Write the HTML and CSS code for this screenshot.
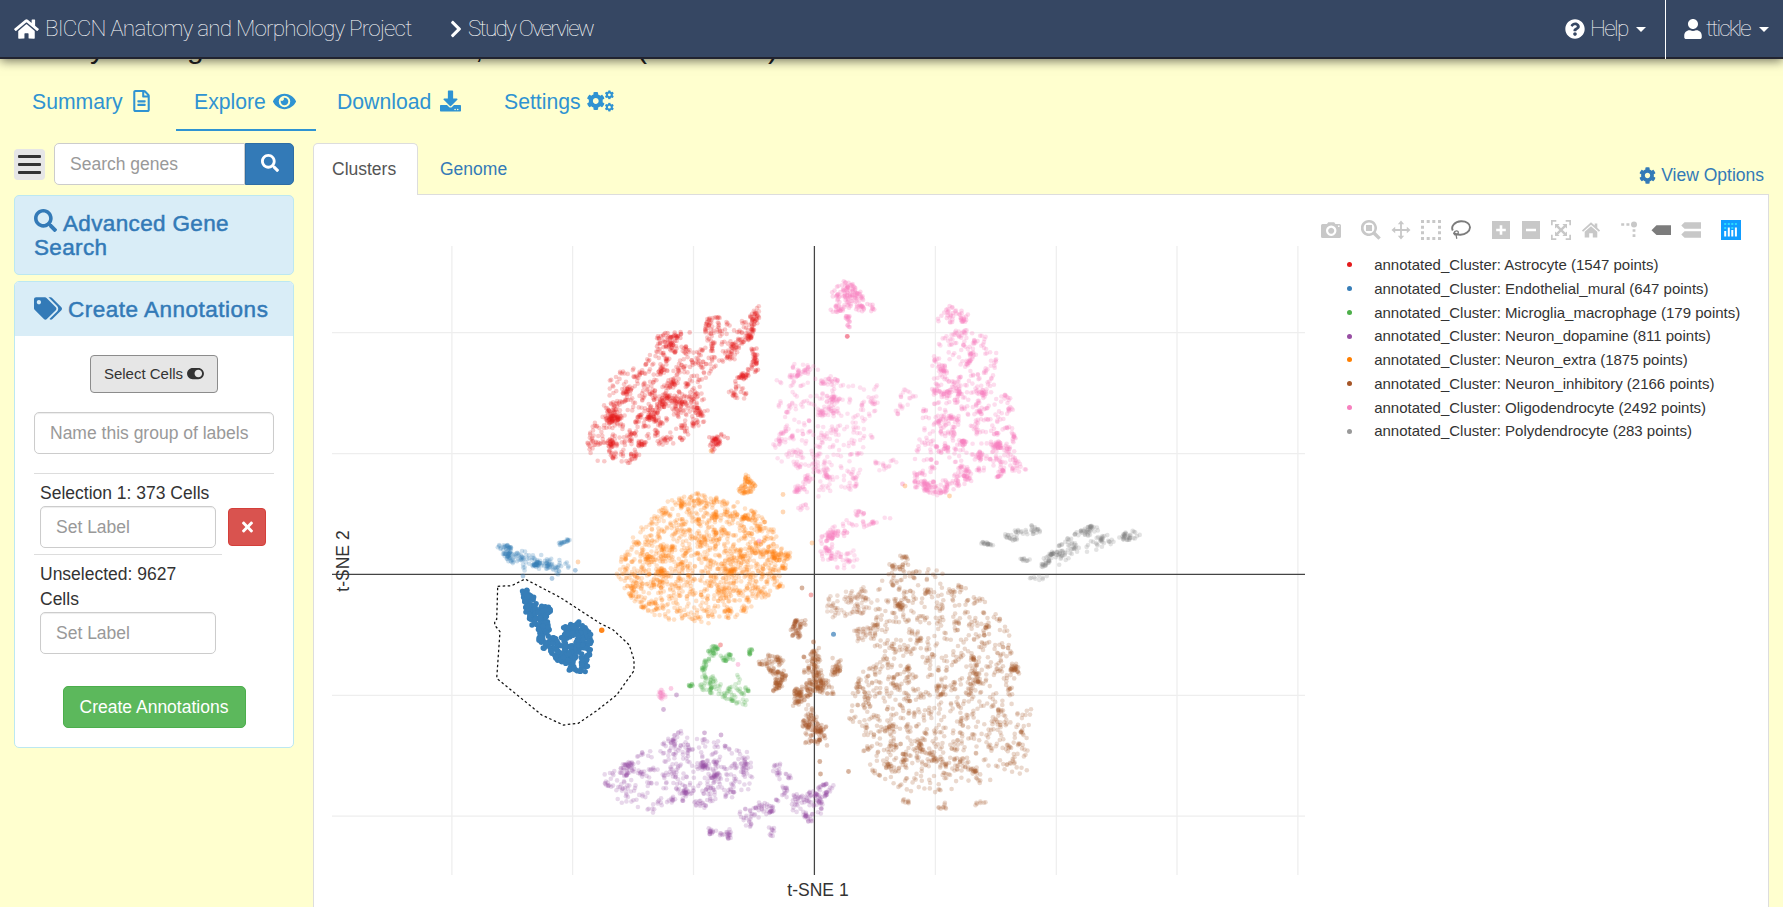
FILE: index.html
```
<!DOCTYPE html>
<html lang="en">
<head>
<meta charset="utf-8">
<title>Study Overview</title>
<link rel="stylesheet" href="styles.css">
</head>
<body>
<svg class="defs" aria-hidden="true">
  <symbol id="home" viewBox="0 0 576 512"><path d="M280.37 148.26L96 300.11V464a16 16 0 0 0 16 16l112.06-.29a16 16 0 0 0 15.92-16V368a16 16 0 0 1 16-16h64a16 16 0 0 1 16 16v95.64a16 16 0 0 0 16 16.05L464 480a16 16 0 0 0 16-16V300L295.67 148.26a12.19 12.19 0 0 0-15.3 0zM571.6 251.47L488 182.56V44.05a12 12 0 0 0-12-12h-56a12 12 0 0 0-12 12v72.61L318.47 43a48 48 0 0 0-61 0L4.34 251.47a12 12 0 0 0-1.6 16.9l25.5 31A12 12 0 0 0 45.15 301l235.22-193.74a12.19 12.19 0 0 1 15.3 0L530.9 301a12 12 0 0 0 16.9-1.6l25.5-31a12 12 0 0 0-1.7-16.93z"/></symbol>
  <symbol id="chevron" viewBox="0 0 320 512"><path d="M285.476 272.971L91.132 467.314c-9.373 9.373-24.569 9.373-33.941 0l-22.667-22.667c-9.357-9.357-9.375-24.522-.04-33.901L188.505 256 34.484 101.255c-9.335-9.379-9.317-24.544.04-33.901l22.667-22.667c9.373-9.373 24.569-9.373 33.941 0L285.475 239.03c9.373 9.372 9.373 24.568.001 33.941z"/></symbol>
  <symbol id="question" viewBox="0 0 512 512"><path d="M504 256c0 136.997-111.043 248-248 248S8 392.997 8 256C8 119.083 119.043 8 256 8s248 111.083 248 248zM262.655 90c-54.497 0-89.255 22.957-116.549 63.758-3.536 5.286-2.353 12.415 2.715 16.258l34.699 26.31c5.205 3.947 12.621 3.008 16.665-2.122 17.864-22.658 30.113-35.797 57.303-35.797 20.429 0 45.698 13.148 45.698 32.958 0 14.976-12.363 22.667-32.534 33.976C247.128 238.528 216 254.941 216 296v4c0 6.627 5.373 12 12 12h56c6.627 0 12-5.373 12-12v-1.333c0-28.462 83.186-29.647 83.186-106.667 0-58.002-60.165-102-116.531-102zM256 338c-25.365 0-46 20.635-46 46 0 25.364 20.635 46 46 46s46-20.636 46-46c0-25.365-20.635-46-46-46z"/></symbol>
  <symbol id="user" viewBox="0 0 448 512"><path d="M224 256c70.7 0 128-57.3 128-128S294.7 0 224 0 96 57.3 96 128s57.3 128 128 128zm89.6 32h-16.7c-22.2 10.2-46.9 16-72.9 16s-50.6-5.8-72.9-16h-16.7C60.2 288 0 348.2 0 422.4V464c0 26.5 21.5 48 48 48h352c26.5 0 48-21.5 48-48v-41.6c0-74.2-60.2-134.4-134.4-134.4z"/></symbol>
  <symbol id="file" viewBox="0 0 384 512"><path d="M288 248v28c0 6.6-5.4 12-12 12H108c-6.6 0-12-5.4-12-12v-28c0-6.6 5.4-12 12-12h168c6.6 0 12 5.4 12 12zm-12 72H108c-6.6 0-12 5.4-12 12v28c0 6.6 5.4 12 12 12h168c6.6 0 12-5.4 12-12v-28c0-6.6-5.4-12-12-12zm108-188.1V464c0 26.5-21.5 48-48 48H48c-26.5 0-48-21.5-48-48V48C0 21.5 21.5 0 48 0h204.1C264.8 0 277 5.1 286 14.1L369.9 98c9 8.9 14.1 21.2 14.1 33.9zm-128-80V128h76.1L256 51.9zM336 464V176H232c-13.3 0-24-10.7-24-24V48H48v416h288z"/></symbol>
  <symbol id="eye" viewBox="0 0 576 512"><path d="M572.52 241.4C518.29 135.59 410.93 64 288 64S57.68 135.64 3.48 241.41a32.35 32.35 0 0 0 0 29.19C57.71 376.41 165.07 448 288 448s230.32-71.64 284.52-177.41a32.35 32.35 0 0 0 0-29.19zM288 400a144 144 0 1 1 144-144 143.93 143.93 0 0 1-144 144zm0-240a95.31 95.31 0 0 0-25.31 3.79 47.85 47.85 0 0 1-66.9 66.9A95.78 95.78 0 1 0 288 160z"/></symbol>
  <symbol id="download" viewBox="0 0 512 512"><path d="M216 0h80c13.3 0 24 10.7 24 24v168h87.7c17.8 0 26.7 21.5 14.1 34.1L269.7 378.3c-7.5 7.5-19.8 7.5-27.3 0L90.1 226.1c-12.6-12.6-3.7-34.1 14.1-34.1H192V24c0-13.3 10.7-24 24-24zm296 376v112c0 13.3-10.7 24-24 24H24c-13.3 0-24-10.7-24-24V376c0-13.3 10.7-24 24-24h146.7l49 49c20.1 20.1 52.5 20.1 72.6 0l49-49H488c13.3 0 24 10.7 24 24zm-124 88c0-11-9-20-20-20s-20 9-20 20 9 20 20 20 20-9 20-20zm64 0c0-11-9-20-20-20s-20 9-20 20 9 20 20 20 20-9 20-20z"/></symbol>
  <symbol id="cog" viewBox="0 0 512 512"><path d="M487.4 315.7l-42.6-24.6c4.3-23.2 4.3-47 0-70.2l42.6-24.6c4.9-2.8 7.1-8.6 5.5-14-11.1-35.6-30-67.8-54.7-94.6-3.8-4.1-10-5.1-14.8-2.3L380.8 110c-17.9-15.4-38.5-27.3-60.8-35.1V25.8c0-5.6-3.9-10.5-9.4-11.7-36.7-8.2-74.3-7.8-109.2 0-5.5 1.2-9.4 6.1-9.4 11.7V75c-22.2 7.9-42.8 19.8-60.8 35.1L88.7 85.5c-4.9-2.8-11-1.9-14.8 2.3-24.7 26.7-43.6 58.9-54.7 94.6-1.7 5.4.6 11.2 5.5 14L67.3 221c-4.3 23.2-4.3 47 0 70.2l-42.6 24.6c-4.9 2.8-7.1 8.6-5.5 14 11.1 35.6 30 67.8 54.7 94.6 3.8 4.1 10 5.1 14.8 2.3l42.6-24.6c17.9 15.4 38.5 27.3 60.8 35.1v49.2c0 5.6 3.9 10.5 9.4 11.7 36.7 8.2 74.3 7.8 109.2 0 5.5-1.2 9.4-6.1 9.4-11.7v-49.2c22.2-7.9 42.8-19.8 60.8-35.1l42.6 24.6c4.9 2.8 11 1.9 14.8-2.3 24.7-26.7 43.6-58.9 54.7-94.6 1.5-5.5-.7-11.3-5.6-14.1zM256 336c-44.1 0-80-35.9-80-80s35.9-80 80-80 80 35.9 80 80-35.9 80-80 80z"/></symbol>
  <symbol id="cogs" viewBox="0 0 640 512"><use href="#cog" x="-12" y="36" width="440" height="440"/><use href="#cog" x="420" y="0" width="220" height="220"/><use href="#cog" x="420" y="292" width="220" height="220"/></symbol>
  <symbol id="search" viewBox="0 0 512 512"><path d="M505 442.7L405.3 343c-4.5-4.5-10.6-7-17-7H372c27.6-35.3 44-79.7 44-128C416 93.1 322.9 0 208 0S0 93.1 0 208s93.1 208 208 208c48.3 0 92.7-16.4 128-44v16.3c0 6.4 2.5 12.5 7 17l99.7 99.7c9.4 9.4 24.6 9.4 33.9 0l28.3-28.3c9.4-9.4 9.4-24.6.1-34zM208 336c-70.7 0-128-57.2-128-128 0-70.7 57.2-128 128-128 70.7 0 128 57.2 128 128 0 70.7-57.2 128-128 128z"/></symbol>
  <symbol id="tags" viewBox="0 0 640 512"><path d="M497.941 225.941L286.059 14.059A48 48 0 0 0 252.118 0H48C21.49 0 0 21.49 0 48v204.118a48 48 0 0 0 14.059 33.941l211.882 211.882c18.744 18.745 49.136 18.746 67.882 0l204.118-204.118c18.745-18.745 18.745-49.137 0-67.882zM112 160c-26.51 0-48-21.49-48-48s21.49-48 48-48 48 21.49 48 48-21.49 48-48 48zm513.941 133.823L421.823 497.941c-18.745 18.745-49.137 18.745-67.882 0l-.36-.36L527.64 323.522c16.999-16.999 26.36-39.6 26.36-63.64s-9.362-46.641-26.36-63.64L331.397 0h48.721a48 48 0 0 1 33.941 14.059l211.882 211.882c18.745 18.745 18.745 49.137 0 67.882z"/></symbol>
  <symbol id="toggle" viewBox="0 0 576 512"><path d="M384 64H192C86 64 0 150 0 256s86 192 192 192h192c106 0 192-86 192-192S490 64 384 64zm0 320c-70.8 0-128-57.3-128-128 0-70.8 57.3-128 128-128 70.8 0 128 57.3 128 128 0 70.8-57.3 128-128 128z"/></symbol>
  <symbol id="times" viewBox="0 0 352 512"><path d="M242.72 256l100.07-100.07c12.28-12.28 12.28-32.19 0-44.48l-22.24-22.24c-12.28-12.28-32.19-12.28-44.48 0L176 189.28 75.93 89.21c-12.28-12.28-32.19-12.28-44.48 0L9.21 111.45c-12.28 12.28-12.28 32.19 0 44.48L109.28 256 9.21 356.07c-12.28 12.28-12.28 32.19 0 44.48l22.24 22.24c12.28 12.28 32.2 12.28 44.48 0L176 322.72l100.07 100.07c12.28 12.28 32.2 12.28 44.48 0l22.24-22.24c12.28-12.28 12.28-32.19 0-44.48L242.72 256z"/></symbol>
</svg>

<header class="navbar">
  <a class="brand"><svg class="i-home"><use href="#home"/></svg><span class="thin brand-text">BICCN Anatomy and Morphology Project</span></a>
  <a class="crumb"><svg class="i-chevron"><use href="#chevron"/></svg><span class="thin crumb-text">Study Overview</span></a>
  <div class="nav-right">
    <a class="nav-help"><svg class="i-question"><use href="#question"/></svg><span class="thin help-text">Help</span><i class="caret"></i></a>
    <a class="nav-user"><svg class="i-user"><use href="#user"/></svg><span class="thin user-text">ttickle</span><i class="caret"></i></a>
  </div>
</header>

<h1 class="study-title"><span>y</span><span>g</span><span>,</span><span>(</span><span>)</span></h1>

<nav class="study-tabs">
  <a class="tab-summary">Summary<svg class="i-file"><use href="#file"/></svg></a>
  <a class="tab-explore active">Explore<svg class="i-eye"><use href="#eye"/></svg></a>
  <a class="tab-download">Download<svg class="i-download"><use href="#download"/></svg></a>
  <a class="tab-settings">Settings<svg class="i-cogs"><use href="#cogs"/></svg></a>
</nav>

<main class="explore">
  <aside class="sidebar">
    <div class="search-row">
      <button class="menu-btn"><i></i><i></i><i></i></button>
      <div class="search-group">
        <input class="search-input" placeholder="Search genes">
        <button class="search-btn"><svg><use href="#search"/></svg></button>
      </div>
    </div>
    <section class="panel adv-panel"><h4><svg class="i-adv"><use href="#search"/></svg>Advanced Gene Search</h4></section>
    <section class="panel annot-panel">
      <div class="panel-head"><h4><svg class="i-tags"><use href="#tags"/></svg>Create Annotations</h4></div>
      <div class="panel-body">
        <button class="btn-select">Select Cells<svg><use href="#toggle"/></svg></button>
        <input class="field group-name" placeholder="Name this group of labels">
        <div class="selection-row">
          <div class="selection">
            <span>Selection 1: 373 Cells</span>
            <input class="field" placeholder="Set Label">
          </div>
          <button class="btn-delete"><svg><use href="#times"/></svg></button>
        </div>
        <div class="unselected">
          <span>Unselected: 9627 Cells</span>
          <input class="field" placeholder="Set Label">
        </div>
        <button class="btn-create">Create Annotations</button>
      </div>
    </section>
  </aside>

  <section class="results">
    <div class="tabs">
      <a class="tab current">Clusters</a>
      <a class="tab other">Genome</a>
      <a class="view-options"><svg><use href="#cog"/></svg>View Options</a>
    </div>
    <div class="tab-content">
      <svg class="plot" id="plot" viewBox="332 195 973 712" width="973" height="712"></svg>
      <div class="plot-side">
        <div class="modebar">
          <svg viewBox="0 0 20 20"><path fill-rule="evenodd" d="M1.5 4H6l1.2-1.8h6L14.400 4h4.100A1.500 1.500 0 0 1 20 5.500v11a1.500 1.500 0 0 1-1.500 1.500h-17A1.500 1.500 0 0 1 0 16.500v-11A1.500 1.500 0 0 1 1.500 4zM10.200 5.500a5.200 5.200 0 1 0 .01 0zm0 2.200a3 3 0 1 1-.01 0zM17 5.500v1.500h1.500V5.500z"/></svg>
          <svg class="gap" viewBox="0 0 20 20"><path fill-rule="evenodd" d="M8 0a8 8 0 0 1 6.700 12.300l5.100 5.100-2.400 2.400-5.200-5.100A8 8 0 1 1 8 0zm0 2.600a5.400 5.400 0 1 0 .01 0z"/><path d="M5 5h6v6H5z"/></svg>
          <svg viewBox="0 0 20 20"><path d="M10 .5l3.200 3.700h-2.300v4.900h4.900V6.800l3.700 3.200-3.700 3.200v-2.300h-4.900v4.900h2.300L10 19.500l-3.200-3.700h2.300v-4.900H4.200v2.300L.5 10l3.700-3.200v2.300h4.900V4.200H6.800z"/></svg>
          <svg viewBox="0 0 20 20"><path d="M0 0h3v3H0zM5.700 0h3v3h-3zM11.300 0h3v3h-3zM17 0h3v3h-3zM0 5.700h3v3H0zM0 11.300h3v3H0zM0 17h3v3H0zM17 5.700h3v3h-3zM17 11.300h3v3h-3zM17 17h3v3h-3zM5.700 17h3v3h-3zM11.300 17h3v3h-3z"/></svg>
          <svg class="on outline" viewBox="0 0 20 20"><path d="M1.800 10.500C-.5 6 4 1.500 10 1.300c5.500-.2 9.200 2.500 9 6.200-.2 4-4.500 7.200-9.500 7.300-3 .1-5.500-.7-6.900-2"/><path class="fine" d="M3 12.800c.5-2.300 4.500-2.600 4.300-.2-.2 2.700-4.700 3.300-4.300.2zm2.500 1.500c-.5 1.500-.2 3 .3 4.400"/></svg>
          <svg class="gap" viewBox="0 0 20 20"><path fill-rule="evenodd" d="M1 1h18v18H1zM8.700 5.200v3.500H5.200v2.600h3.500v3.500h2.600v-3.500h3.500V8.700h-3.500V5.200z"/></svg>
          <svg viewBox="0 0 20 20"><path fill-rule="evenodd" d="M1 1h18v18H1zM5 8.700v2.600h10V8.700z"/></svg>
          <svg viewBox="0 0 20 20"><path d="M0 0h5.300v1.700H1.700v3.600H0zM20 0h-5.300v1.700h3.600v3.600H20zM0 20h5.300v-1.700H1.700v-3.600H0zM20 20h-5.300v-1.700h3.600v-3.600H20zM4 4h4.600L7.200 5.500 10 8.300l2.800-2.800L11.400 4H16v4.600l-1.500-1.400L11.700 10l2.800 2.800 1.500-1.400V16h-4.600l1.400-1.500-2.800-2.800-2.800 2.800L8.600 16H4v-4.600l1.500 1.400L8.300 10 5.500 7.200 4 8.600z"/></svg>
          <svg viewBox="0 0 20 20"><path d="M10 6.200l6.300 5.600v5.600h-4.500v-4.200H8.200v4.200H3.700v-5.600zM10 2.300l3.700 3.300V3.400h2.600v4.400l2.800 2.600-1.200 1.300L10 4.700l-7.900 7L.9 10.400z"/></svg>
          <svg class="gap" viewBox="0 0 20 20"><path d="M.2 3.200h3v2.600h-3zM5.400 3.200h3v2.600h-3zM11.600 9.200h2.800v2.600h-2.800zM11.600 14.200h2.800V17h-2.800z"/><circle cx="13" cy="4.600" r="3"/></svg>
          <svg class="on" viewBox="0 0 20 20"><path d="M5.500 5.300H20v9.700H5.500L.5 10.200z"/></svg>
          <svg viewBox="0 0 20 20"><path d="M3.500 2.200H20v6.600H3.500L.3 5.500zM3.500 11.200H20v6.600H3.500L.3 14.500z"/></svg>
          <svg class="gap" viewBox="0 0 20 20"><path fill="#119dff" d="M0 0h20v20H0z"/><path fill="#fff" d="M3.200 11h2v5.500h-2zM6.800 7.500h2v9h-2zM10.300 10h2v6.500h-2zM13.900 7.500h2v9h-2z"/><path fill="#3ef" d="M3.200 3.300h2v1.500h-2zM6.800 3.300h2v1.500h-2zM10.300 3.300h2v1.500h-2zM13.900 3.300h2v1.500h-2zM3.200 7.200h2v1.500h-2zM10.300 7.200h2v1.500h-2z"/></svg>
        </div>
        <ul class="legend">
          <li class="c-red">annotated_Cluster: Astrocyte (1547 points)</li>
          <li class="c-blue">annotated_Cluster: Endothelial_mural (647 points)</li>
          <li class="c-green">annotated_Cluster: Microglia_macrophage (179 points)</li>
          <li class="c-purple">annotated_Cluster: Neuron_dopamine (811 points)</li>
          <li class="c-orange">annotated_Cluster: Neuron_extra (1875 points)</li>
          <li class="c-brown">annotated_Cluster: Neuron_inhibitory (2166 points)</li>
          <li class="c-pink">annotated_Cluster: Oligodendrocyte (2492 points)</li>
          <li class="c-gray">annotated_Cluster: Polydendrocyte (283 points)</li>
        </ul>
      </div>
    </div>
  </section>
</main>
<script src="plot.js"></script>
</body>
</html>
```
FILE: styles.css
```
* { box-sizing: border-box; }
body {
  margin: 0;
  height: 907px;
  overflow: hidden;
  background: #ffffcf;
  color: #333;
  font: 17.5px/25px "Liberation Sans", Arial, sans-serif;
}
svg { fill: currentColor; flex: none; }
.defs { position: absolute; width: 0; height: 0; }
a { color: #337ab7; text-decoration: none; }
button, input { font: inherit; margin: 0; }
h1, h4, ul { margin: 0; padding: 0; font-weight: normal; }

/* top bar */
.navbar {
  position: relative;
  z-index: 2;
  display: flex;
  height: 59px;
  background: #364763;
  border-bottom: 2px solid #222430;
  box-shadow: 0 2px 10px rgba(0, 0, 0, .55);
}
.navbar a { display: flex; align-items: center; color: #fff; }
.thin { font-family: Roboto, "Liberation Sans", sans-serif; font-weight: 100; font-size: 22.5px; white-space: nowrap; }
.brand { padding-left: 14px; width: 450px; }
.i-home { width: 25px; height: 22px; margin-right: 6px; }
.brand-text { letter-spacing: -.78px; }
.i-chevron { width: 12px; height: 22px; margin-right: 6px; }
.crumb-text { letter-spacing: -1.75px; }
.nav-right { display: flex; margin-left: auto; }
.nav-help { width: 100px; }
.i-question { width: 20px; height: 20px; margin-right: 5px; }
.nav-user { width: 118px; padding-left: 18px; border-left: 1px solid #fff; height: 59px; padding-bottom: 2px; }
.i-user { width: 18px; height: 20px; margin-right: 4px; }
.help-text { width: 46px; letter-spacing: -1.6px; }
.user-text { width: 53px; letter-spacing: -1.9px; }
.caret { margin-top: 2px; border: 5px solid transparent; border-top-color: #fff; border-bottom: 0; }

.study-title { display: flex; height: 28px; margin-top: -28px; padding-left: 90px; font-size: 30px; line-height: 33px; color: #222; }
.study-title span:nth-child(1) { width: 97px; }
.study-title span:nth-child(2) { width: 288px; }
.study-title span:nth-child(3) { width: 162px; }
.study-title span:nth-child(4) { width: 131px; }

/* study tabs */
.study-tabs { display: flex; height: 72px; padding: 18px 0 0 14px; font-size: 21.2px; }
.study-tabs a { display: flex; align-items: center; height: 54px; padding: 0 18px 4px; border-bottom: 2px solid transparent; color: #2f93d2; }
.study-tabs .active { border-color: #2f93d2; }
.tab-summary { width: 162px; }
.tab-explore { width: 140px; }
.tab-download { width: 167px; margin-left: 3px; }
.study-tabs svg { margin-left: auto; }
.tab-summary .i-file { width: 17px; height: 22px; margin-right: 8px; }
.i-eye { width: 23px; height: 21px; margin-right: 2px; }
.i-download { width: 21px; height: 22px; margin-right: 7px; }
.i-cogs { width: 27px; height: 22px; }
.study-tabs .tab-settings { width: 147px; padding-right: 19px; }

/* sidebar */
.explore { display: flex; height: 776px; padding-left: 14px; }
.sidebar { width: 280px; padding-top: 12px; }
.search-row { display: flex; align-items: center; height: 42px; }
.menu-btn { display: grid; gap: 5px; align-content: center; width: 31px; height: 31px; padding: 0 4px; border: 0; border-radius: 4px; background: #e6e6e6; }
.menu-btn i { height: 3px; border-radius: 1px; background: #333; }
.search-group { display: flex; width: 240px; height: 42px; margin-left: auto; }
.search-input { width: 191px; padding: 0 15px; border: 1px solid #ccc; border-radius: 5px 0 0 5px; background: #fff; }
.search-btn { flex: 1; padding: 0; border: 1px solid #2e6da4; border-radius: 0 5px 5px 0; background: #337ab7; color: #fff; }
.search-btn svg { width: 18px; height: 18px; vertical-align: -2px; }
input::placeholder { color: #999; opacity: 1; }
.panel { margin-top: 10px; border: 1px solid #bce8f1; border-radius: 5px; background: #fff; }
.panel h4 { color: #337ab7; font-size: 22.5px; line-height: 24px; letter-spacing: .35px; -webkit-text-stroke: .5px #337ab7; }
.adv-panel { height: 80px; padding: 13px 19px; background: #d9edf7; }
.i-adv { width: 23px; height: 23px; margin-right: 6px; vertical-align: -1px; }
.annot-panel { height: 467px; margin-top: 6px; }
.panel-head { height: 54px; padding: 15px 19px; background: #d9edf7; border-radius: 4px 4px 0 0; }
.panel-head h4 { white-space: nowrap; letter-spacing: .5px; }
.i-tags { width: 28px; height: 23px; margin-right: 6px; vertical-align: -3px; }
.panel-body { display: flex; flex-direction: column; align-items: flex-start; padding: 19px 19px 0; }
.btn-select { display: flex; align-items: center; justify-content: center; align-self: center; width: 128px; height: 38px; padding: 0 0 2px; border: 1px solid #8c8c8c; border-radius: 4px; background: #e6e6e6; color: #333; font-size: 15px; }
.btn-select svg { width: 17px; height: 15px; margin-left: 4px; }
.field { display: block; width: 176px; height: 42px; padding: 0 15px; border: 1px solid #ccc; border-radius: 5px; background: #fff; box-shadow: inset 0 1px 1px rgba(0, 0, 0, .075); }
.group-name { width: 240px; margin-top: 19px; }
.selection-row { display: flex; width: 240px; margin-top: 19px; border-top: 1px solid #ddd; }
.selection { width: 188px; height: 81px; padding: 7px 6px 0; border-bottom: 1px solid #ddd; }
.btn-delete { width: 38px; height: 38px; margin: 34px 0 0 6px; padding: 0; border: 1px solid #d43f3a; border-radius: 4px; background: #d9534f; color: #fff; }
.btn-delete svg { width: 11px; height: 16px; vertical-align: -2px; }
.unselected { width: 188px; padding: 7px 6px 0; }
.btn-create { align-self: center; width: 183px; height: 42px; margin-top: 32px; padding: 0; border: 1px solid #4cae4c; border-radius: 5px; background: #5cb85c; color: #fff; }

/* results */
.results { width: 1456px; margin-left: 19px; padding-top: 12px; }
.tabs { display: flex; height: 51px; }
.tab { padding: 13px 18px 0; margin-right: 4px; }
.other { padding-top: 14px; }
.current { position: relative; height: 52px; width: 105px; border: 1px solid #ddd; border-bottom: 0; border-radius: 5px 5px 0 0; background: #fff; color: #555; }
.view-options { display: flex; align-items: center; margin: 20px 5px 6px auto; }
.view-options svg { width: 17px; height: 17px; margin-right: 5px; }
.tab-content { display: flex; height: 713px; border: 1px solid #ddd; border-bottom: 0; background: #fff; padding-left: 18px; }
.plot { display: block; }
.plot-side { padding: 25px 0 0 16px; }
.modebar { display: flex; gap: 10px; height: 20px; color: #c8c8c8; }
.modebar svg { width: 20px; height: 20px; }
.modebar .gap { margin-left: 10px; }
.modebar .on { color: #7c7c7c; }
.modebar .outline { fill: none; stroke: #7c7c7c; stroke-width: 1.9; }
.outline .fine { stroke-width: 1.3; }
.legend { margin-top: 13px; list-style: none; font-size: 15px; line-height: 23.75px; white-space: nowrap; }
.legend li { display: flex; align-items: center; }
.legend li::before { content: ""; width: 5.200px; height: 5.200px; margin: 0 22px 0 26px; border-radius: 50%; background: var(--c); }
.c-red { --c: #e41a1c; }
.c-blue { --c: #377eb8; }
.c-green { --c: #4daf4a; }
.c-purple { --c: #984ea3; }
.c-orange { --c: #ff7f00; }
.c-brown { --c: #a65628; }
.c-pink { --c: #f781bf; }
.c-gray { --c: #999; }
.grid { stroke: #eee; stroke-width: 1.25; }
.axis { stroke: #444; stroke-width: 1.25; }
.axis-title { font-size: 17.5px; fill: #333; }
.lasso { fill: none; stroke: #111; stroke-width: 1.25; stroke-dasharray: 2.500 2.500; }
```
FILE: plot.js
```
(function () {
  var NS = 'http://www.w3.org/2000/svg';
  var plot = document.getElementById('plot');
  var seed = 20190611;
  function rnd() {
    seed = (seed * 1664525 + 1013904223) % 4294967296;
    return seed / 4294967296;
  }
  function gauss() { return (rnd() + rnd() + rnd() - 1.5) * 1.15; }
  function el(name, attrs, text) {
    var n = document.createElementNS(NS, name);
    for (var k in attrs) n.setAttribute(k, attrs[k]);
    if (text) n.textContent = text;
    plot.appendChild(n);
    return n;
  }

  [451.900, 572.600, 693.500, 935.400, 1056.300, 1177, 1297.900].forEach(function (x) {
    el('line', { class: 'grid', x1: x, x2: x, y1: 246, y2: 875 });
  });
  [332.500, 453.500, 695.300, 816.200].forEach(function (y) {
    el('line', { class: 'grid', x1: 332, x2: 1305, y1: y, y2: y });
  });
  el('line', { class: 'axis', x1: 814.400, x2: 814.400, y1: 246, y2: 875 });
  el('line', { class: 'axis', x1: 332, x2: 1305, y1: 574.400, y2: 574.400 });

  function inside(p, x, y) {
    var c = false;
    for (var i = 0, j = p.length - 2; i < p.length; j = i, i += 2) {
      if ((p[i + 1] > y) !== (p[j + 1] > y) &&
          x < (p[j] - p[i]) * (y - p[i + 1]) / (p[j + 1] - p[i + 1]) + p[i]) c = !c;
    }
    return c;
  }
  function dots(list, color, alpha, r) {
    var d = '';
    list.forEach(function (p) {
      d += '<circle cx="' + p[0].toFixed(1) + '" cy="' + p[1].toFixed(1) + '" r="' + r + '"/>';
    });
    el('g', { fill: color, 'fill-opacity': alpha }).innerHTML = d;
  }
  /* Fill an outline with n points; `clump` is the share placed beside an evenly spread one.
     Outlines are in thirds of a pixel from the origin (ox, oy). */
  function cloud(ox, oy, color, n, clump, p, holes, alpha, r) {
    var xs = p.filter(function (v, i) { return i % 2 === 0; });
    var ys = p.filter(function (v, i) { return i % 2 === 1; });
    var x0 = Math.min.apply(0, xs), x1 = Math.max.apply(0, xs);
    var y0 = Math.min.apply(0, ys), y1 = Math.max.apply(0, ys);
    var pts = [], base = [], guard = 0;
    while (pts.length < n && guard++ < n * 80) {
      var x, y, near = base.length > Math.min(8, n / 3) && rnd() < clump;
      if (near) {
        var q = base[Math.floor(rnd() * rnd() * base.length)];
        x = q[0] + gauss() * 11; y = q[1] + gauss() * 11;
      } else {
        x = x0 + rnd() * (x1 - x0); y = y0 + rnd() * (y1 - y0);
      }
      if (!inside(p, x, y)) continue;
      var hit = (holes || []).some(function (h) {
        return (x - h[0]) * (x - h[0]) + (y - h[1]) * (y - h[1]) < h[2] * h[2];
      });
      if (hit) continue;
      pts.push([x, y]);
      if (!near) base.push([x, y]);
    }
    dots(pts.map(function (q) { return [ox + q[0] / 3, oy + q[1] / 3]; }), color, alpha || .22, r || 2.300);
  }

  var RED = '#e41a1c', BLUE = '#377eb8', GREEN = '#4daf4a', PURPLE = '#984ea3',
      ORANGE = '#ff7f0e', BROWN = '#a65628', PINK = '#f781bf', GRAY = '#808080';

  /* Astrocyte */
  cloud(310, 130, RED, 1060, .4, [820,960,845,890,885,800,905,725,1010,700,1000,680,1060,650,1140,645,1175,650,1180,600,1235,575,1290,575,1340,530,1330,600,1335,620,1300,640,1290,690,1210,715,1190,740,1195,870,1130,925,1080,948,1020,940,965,1000,870,995,830,985],
    [[1090,700,10],[1060,850,14],[950,870,14],[1265,615,9],[930,800,10],[1130,790,9]], .23);
  cloud(310, 130, RED, 60, .4, [1030,625,1060,603,1145,605,1110,625,1090,655,1040,650], null, .27);
  cloud(310, 130, RED, 40, .4, [1180,610,1190,565,1230,560,1235,615]);
  cloud(310, 130, RED, 45, .4, [1320,550,1348,523,1348,560,1335,620,1320,600]);
  cloud(310, 130, RED, 60, .4, [1322,640,1340,650,1345,720,1300,750,1265,760,1300,725,1325,700], null, .27);
  cloud(310, 130, RED, 25, .5, [1245,800,1275,760,1310,780,1305,835,1285,805]);
  cloud(310, 130, RED, 40, .5, [1195,920,1245,908,1258,925,1220,950,1210,968,1200,960], null, .27);

  /* Oligodendrocyte */
  cloud(740, 240, PINK, 120, .4, [265,165,312,118,365,145,370,180,345,200,300,215,265,218,290,185], null, .3);
  cloud(740, 240, PINK, 24, .4, [350,180,415,190,402,228,380,195,350,245,335,240], null, .3);
  cloud(740, 240, PINK, 16, .4, [317,228,329,228,329,268,318,268], null, .3);
  cloud(740, 240, PINK, 540, .45, [110,420,160,362,230,380,290,420,415,425,418,510,375,560,438,600,375,605,350,760,250,755,235,830,205,810,160,810,165,700,100,660,95,610,140,550,108,490],
    [[190,460,18],[310,460,14],[165,520,12],[270,700,10],[200,770,12]], .24);
  cloud(740, 240, PINK, 100, .4, [235,900,305,825,330,850,390,830,455,828,455,842,380,860,320,885,300,920,270,970,245,970], null, .27);
  cloud(740, 240, PINK, 36, .4, [262,935,345,930,365,980,280,990], null, .24);
  cloud(740, 240, PINK, 14, .4, [345,808,375,820,365,832,348,826]);
  cloud(740, 240, PINK, 24, .4, [460,512,495,440,520,450,545,485,500,508,470,525]);
  cloud(740, 240, PINK, 18, .4, [402,665,475,655,455,695,410,690]);
  cloud(740, 240, PINK, 45, .4, [583,240,605,225,620,188,690,225,680,245,640,248,600,250], null, .3);
  cloud(740, 240, PINK, 830, .45, [605,290,640,262,700,275,750,295,778,350,768,450,820,465,826,520,790,540,828,570,825,640,862,680,850,708,800,690,770,720,755,670,700,720,640,750,585,768,520,745,525,620,550,580,545,510,580,480,565,420,570,360],
    [[673,575,26],[712,377,24],[615,690,32],[590,590,16],[750,480,14],[700,480,10]], .27);
  cloud(740, 240, PINK, 70, .4, [520,740,560,720,640,720,690,680,700,712,640,748,585,768], null, .27);

  /* Polydendrocyte */
  cloud(740, 240, GRAY, 18, .4, [705,905,735,905,762,910,755,922,730,914]);
  cloud(740, 240, GRAY, 48, .4, [785,882,830,870,880,852,905,875,850,890,825,905,790,890]);
  cloud(740, 240, GRAY, 10, .4, [838,952,875,955,870,964,840,962]);
  cloud(740, 240, GRAY, 170, .4, [885,1000,910,955,950,920,1010,875,1058,853,1110,885,1160,885,1110,920,1060,935,1000,940,980,980,955,975,960,945]);
  cloud(740, 240, GRAY, 34, .4, [1140,890,1170,868,1205,885,1175,902,1150,905]);
  cloud(740, 240, GRAY, 9, .4, [865,1010,885,1005,935,1005,925,1020,870,1020]);

  /* Neuron_extra */
  cloud(470, 460, ORANGE, 1580, .3, [436,340,455,270,500,215,545,175,590,125,680,98,760,116,810,120,850,150,910,195,930,250,962,275,955,320,930,340,942,380,880,415,820,465,720,492,610,484,540,465,490,422,452,370], null, .23);
  cloud(470, 460, ORANGE, 60, .4, [826,32,842,60,862,70,845,95,815,108,800,95,825,65], null, .25);

  /* Endothelial_mural */
  cloud(470, 460, BLUE, 65, .4, [78,255,120,255,135,290,140,312,110,305,95,280], null, .25);
  cloud(470, 460, BLUE, 120, .4, [130,270,175,275,230,288,305,310,300,328,275,350,240,330,190,325,160,340,140,305], null, .25);
  cloud(470, 460, BLUE, 20, .4, [255,258,290,232,300,240,270,255]);
  dots([[523,576], [552,578.500], [575.300,570.300]], BLUE, .4, 2.400);
  cloud(470, 460, BLUE, 430, .15, [150,378,165,385,195,412,203,440,232,433,247,460,230,475,245,530,268,540,280,502,300,490,330,485,366,525,358,600,354,662,340,640,328,634,295,630,290,612,265,605,215,560,190,505,168,460,158,410],
    [[262,480,20],[299,545,13],[340,572,7],[320,612,11],[220,415,14],[346,540,6]], 1, 2.700);
  dots([[601.700,630.300]], ORANGE, .95, 2.700);
  dots([[833.500,634.300]], BLUE, .7, 2.500);

  /* Microglia_macrophage */
  cloud(470, 460, GREEN, 50, .35, [722,555,742,560,750,588,720,592,705,640,692,635,712,580], null, .25);
  cloud(470, 460, GREEN, 22, .4, [745,580,785,582,792,600,762,608], null, .25);
  cloud(470, 460, GREEN, 8, .4, [836,565,848,565,842,585,836,582], null, .4);
  cloud(470, 460, GREEN, 6, .4, [655,670,670,668,670,678,657,680], null, .4);
  cloud(470, 460, GREEN, 110, .4, [682,665,705,638,730,650,765,685,800,640,822,665,838,695,832,738,775,725,740,700,690,698]);

  /* Neuron_inhibitory */
  cloud(470, 460, BROWN, 48, .4, [975,480,1005,475,1018,492,995,510,988,545,980,520,948,540], null, .27);
  cloud(470, 460, BROWN, 120, .4, [860,608,890,580,935,590,955,625,955,655,930,690,905,700,905,675,918,650,885,625], null, .25);
  cloud(470, 460, BROWN, 270, .35, [1000,590,1050,560,1055,625,1085,640,1085,575,1112,600,1110,635,1085,660,1092,710,1030,700,975,745,955,720,1000,650], null, .25);
  cloud(470, 460, BROWN, 26, .4, [980,730,1030,735,1045,785,1010,790,1000,765]);
  cloud(470, 460, BROWN, 90, .4, [995,780,1070,792,1072,858,1005,852], null, .27);
  cloud(800, 520, BROWN, 1400, .3, [235,210,255,150,285,112,325,88,380,128,415,153,480,185,540,225,600,295,630,330,645,400,662,455,640,530,700,570,685,680,690,768,640,780,600,745,562,800,440,815,360,822,300,805,215,755,145,620,153,520,170,465,240,420,200,370],
    [[350,440,18],[190,430,14],[600,500,14],[280,700,8]], .23);
  cloud(800, 520, BROWN, 85, .35, [72,260,90,228,150,205,205,200,235,240,190,280,120,300,95,300], null, .2);
  cloud(800, 520, BROWN, 26, .4, [155,330,205,320,235,340,180,370,160,360], null, .2);
  cloud(800, 520, BROWN, 8, .4, [300,830,325,835,335,852,310,848]);
  cloud(800, 520, BROWN, 9, .4, [405,862,430,845,462,855,430,870]);
  cloud(800, 520, BROWN, 7, .4, [515,850,540,838,562,845,525,858]);

  /* Neuron_dopamine */
  cloud(560, 600, PURPLE, 540, .4, [105,550,135,520,180,498,240,455,310,425,360,388,385,415,430,395,500,440,592,462,575,520,585,565,500,600,430,625,390,610,330,642,235,638,165,598,150,560],
    [[410,470,14],[330,560,10],[290,490,14]], .22);
  cloud(560, 600, PURPLE, 60, .4, [520,635,580,605,650,610,640,635,600,655,560,690]);
  cloud(560, 600, PURPLE, 130, .4, [640,590,670,570,655,540,625,492,665,490,695,515,690,570,740,575,800,545,830,560,790,595,785,640,755,670,700,640,690,600,650,605]);
  cloud(560, 600, PURPLE, 35, .5, [700,600,785,575,785,640,755,665,715,640]);
  cloud(560, 600, PURPLE, 36, .4, [438,672,455,690,498,696,512,685,520,708,508,722,490,705,445,708]);
  cloud(560, 600, PURPLE, 10, .4, [625,680,645,675,645,712,628,712]);

  /* Outliers */
  cloud(470, 460, PINK, 22, .4, [553,690,575,688,590,712,575,724]);
  dots([[671,688.500], [738,664.500], [759,541], [847,336.500], [902.500,484]], PINK, .4, 2.400);
  dots([[720.500,645], [847.400,336.300], [811,595]], RED, .35, 2.400);
  dots([[711,451], [578,562], [783,494.500], [783,512], [812,543], [905,486], [949.500,496]], ORANGE, .3, 2.400);
  dots([[676.500,695], [663.500,709.500], [704.500,732.800], [721,735]], PURPLE, .4, 2.400);
  dots([[819.800,761.500], [820.500,774], [848.500,771.500], [802,588], [813.500,642]], BROWN, .45, 2.400);

  var L = [83,379,125,377,165,357,270,412,390,490,430,510,478,555,492,600,492,632,440,705,380,752,325,790,280,795,215,765,80,655,90,515,74,495,74,482,80,478];
  var d = '';
  for (var i = 0; i < L.length; i += 2) {
    d += (i ? 'L' : 'M') + (470 + L[i] / 3).toFixed(1) + ' ' + (460 + L[i + 1] / 3).toFixed(1);
  }
  el('path', { class: 'lasso', d: d + 'Z' });

  el('text', { class: 'axis-title', x: 818, y: 896, 'text-anchor': 'middle' }, 't-SNE 1');
  el('text', { class: 'axis-title', transform: 'translate(349 561) rotate(-90)', 'text-anchor': 'middle' }, 't-SNE 2');
})();
```
